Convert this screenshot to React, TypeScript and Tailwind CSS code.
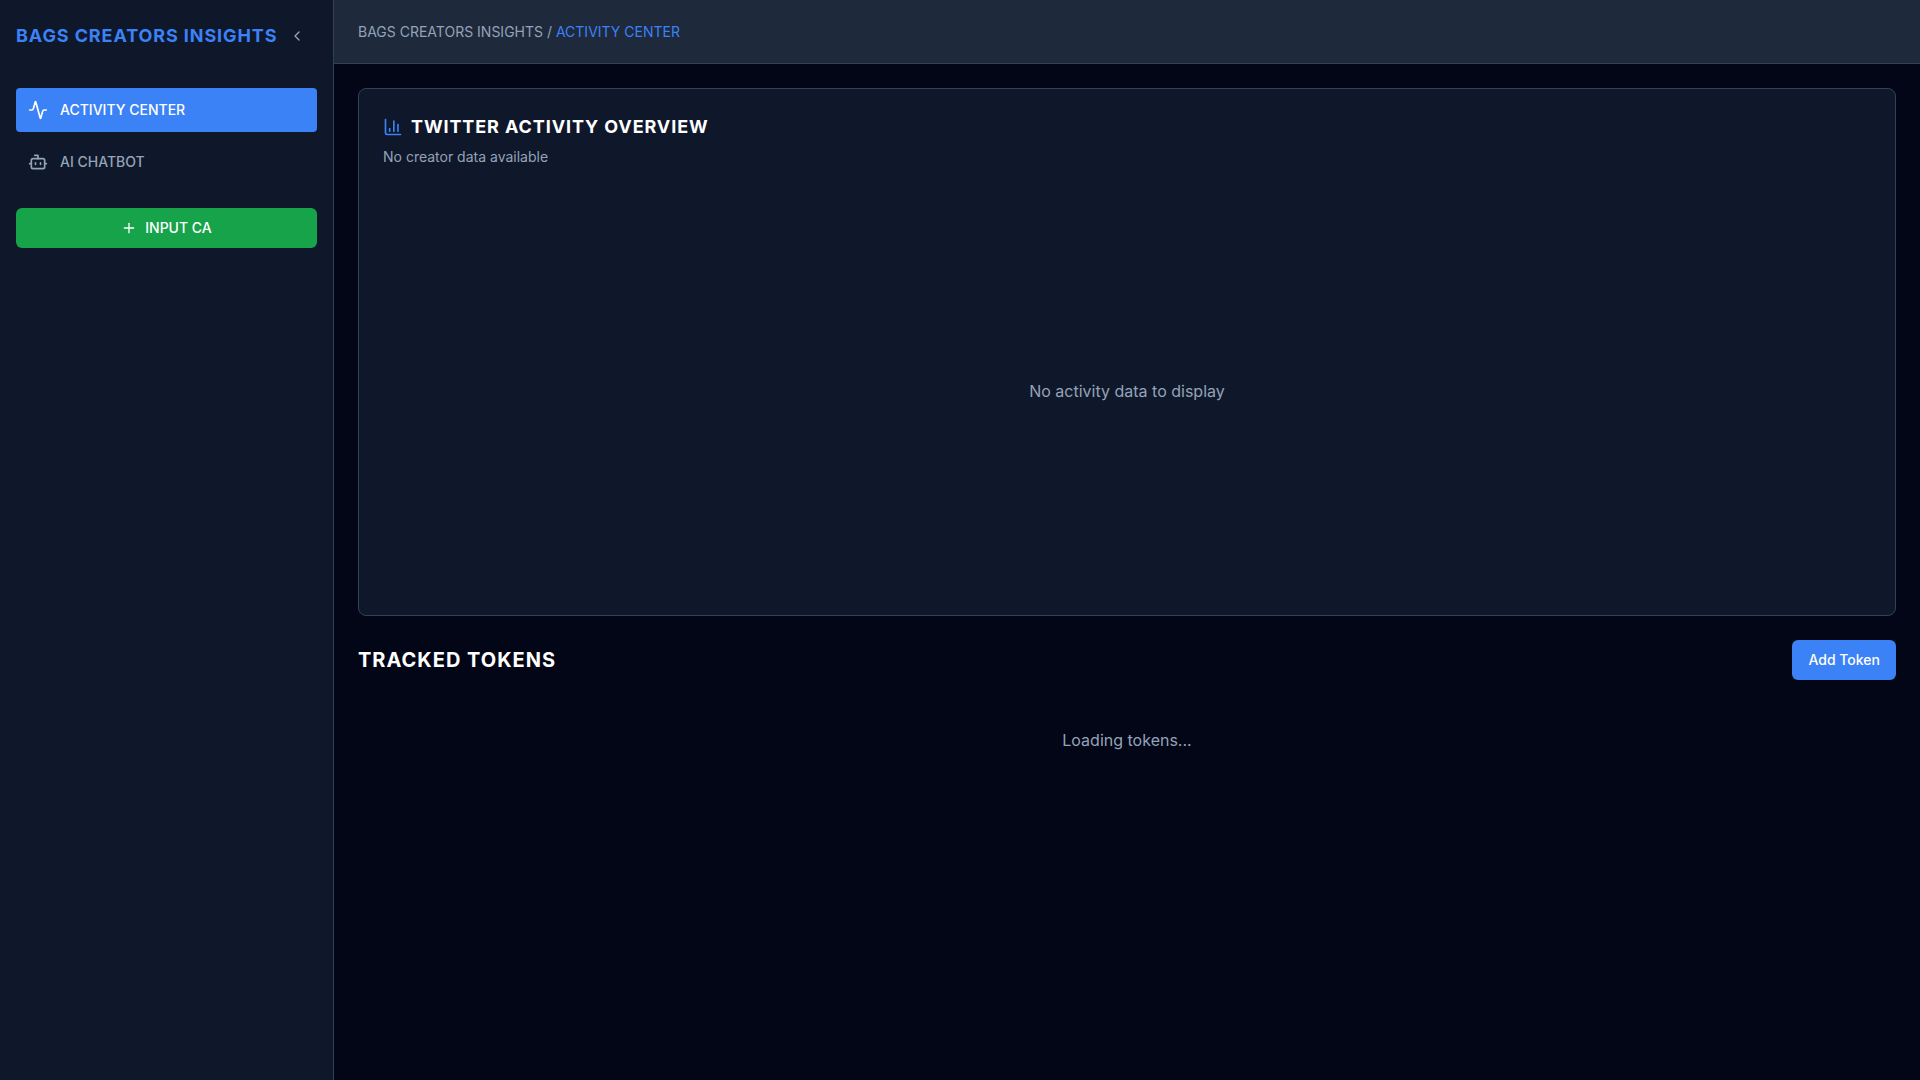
import { Activity, Bot, ChartColumn, ChevronLeft, Plus } from 'lucide-react'
import { clsx } from 'clsx'

const navItems = [
  { id: 'activity', icon: Activity, label: 'ACTIVITY CENTER' },
  { id: 'chatbot', icon: Bot, label: 'AI CHATBOT' },
]

function Sidebar({ active }: { active: string }) {
  return (
    <aside className="w-[334px] shrink-0 border-r border-[#334155] bg-[#0f172a] p-4">
      <div className="mb-8 flex items-center justify-between">
        <h1 className="whitespace-nowrap text-lg font-bold tracking-wider text-[#3b82f6]">
          BAGS CREATORS INSIGHTS
        </h1>
        <button
          type="button"
          aria-label="Collapse sidebar"
          className="flex size-10 shrink-0 items-center justify-center rounded-md text-[#94a3b8]"
        >
          <ChevronLeft className="size-4" />
        </button>
      </div>

      <nav className="space-y-2">
        {navItems.map((item) => (
          <button
            key={item.id}
            type="button"
            className={clsx(
              'flex w-full items-center gap-3 rounded p-3',
              item.id === active
                ? 'bg-[#3b82f6] text-white'
                : 'text-[#94a3b8] hover:bg-[#1e293b] hover:text-white'
            )}
          >
            <item.icon className="size-5" />
            <span className="text-sm font-medium">{item.label}</span>
          </button>
        ))}
      </nav>

      <button
        type="button"
        className="mt-6 flex h-10 w-full items-center justify-center gap-2 rounded-md bg-[#16a34a] px-4 text-sm font-medium text-white"
      >
        <Plus className="size-4" />
        INPUT CA
      </button>
    </aside>
  )
}

function ActivityCard() {
  return (
    <section className="rounded-lg border border-[#334155] bg-[#0f172a]">
      <div className="flex flex-col gap-1.5 p-6">
        <h2 className="flex items-center gap-2 text-lg font-bold tracking-wider text-white">
          <ChartColumn className="size-5 text-[#3b82f6]" />
          TWITTER ACTIVITY OVERVIEW
        </h2>
        <p className="text-sm text-[#94a3b8]">No creator data available</p>
      </div>
      <div className="px-6 pb-6">
        <div className="flex h-[400px] items-center justify-center text-[#94a3b8]">
          No activity data to display
        </div>
      </div>
    </section>
  )
}

export default function App() {
  return (
    <div className="flex min-h-screen bg-[#020617] font-['Inter',sans-serif]">
      <Sidebar active="activity" />

      <div className="flex min-w-0 flex-1 flex-col">
        <header className="flex h-16 items-center border-b border-[#334155] bg-[#1e293b] px-6">
          <div className="text-sm text-[#94a3b8]">
            BAGS CREATORS INSIGHTS / <span className="text-[#3b82f6]">ACTIVITY CENTER</span>
          </div>
        </header>

        <main className="flex-1 space-y-6 p-6">
          <ActivityCard />

          <div className="flex items-center justify-between">
            <h2 className="text-xl font-bold tracking-wider text-white">TRACKED TOKENS</h2>
            <button
              type="button"
              className="h-10 rounded-md bg-[#3b82f6] px-4 text-sm font-medium text-white"
            >
              Add Token
            </button>
          </div>

          {/* Token list placeholder */}
          <div className="py-6 text-center text-[#94a3b8]">Loading tokens...</div>
        </main>
      </div>
    </div>
  )
}
